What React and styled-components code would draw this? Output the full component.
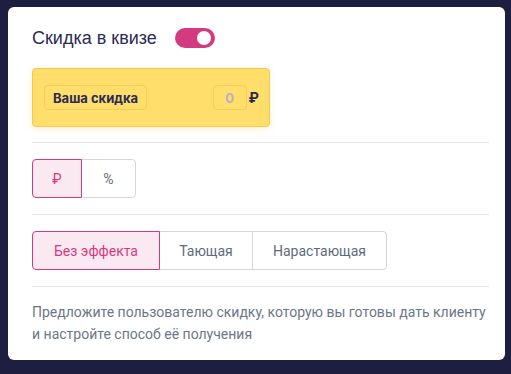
import React, { useState } from 'react';
import styled, { createGlobalStyle, css } from 'styled-components';

const Global = createGlobalStyle`
    html, body {
        margin: 0;
        background: #1e1f40;
    }
    body {
        padding: 7px 6px 14px 8px;
        font-family: Roboto, "Liberation Sans", sans-serif;
    }
`

const Card = styled.div`
    background: #fff;
    border-radius: 6px;
    padding: 20px 16px 15px 24px;
`

const Header = styled.div`
    display: flex;
    align-items: center;
    gap: 18px;
    height: 22px;
`

const Title = styled.div`
    font-family: "Liberation Sans", Arial, sans-serif;
    font-size: 18px;
    color: #2b2b55;
`

const Toggle = styled.div`
    width: 40px;
    height: 20px;
    border-radius: 10px;
    background: #d43a80;
    position: relative;
    &:after {
        content: '';
        position: absolute;
        right: 4px;
        top: 3px;
        width: 14px;
        height: 14px;
        border-radius: 50%;
        background: #fff;
    }
`

const DiscountBox = styled.div`
    margin-top: 19px;
    width: 238px;
    height: 59px;
    box-sizing: border-box;
    background: #ffde6c;
    border: 1px solid #f6c94a;
    border-radius: 4px;
    box-shadow: 0 2px 6px rgba(240, 200, 80, 0.25);
    display: flex;
    align-items: center;
    padding: 0 10px 0 11px;
`

const LabelField = styled.div`
    height: 25px;
    box-sizing: border-box;
    padding: 0 8px;
    border: 1px solid #f3ce5a;
    border-radius: 4px;
    display: flex;
    align-items: center;
    font-family: Inter, Roboto, sans-serif;
    font-weight: 700;
    font-size: 13px;
    color: #2b2b50;
`

const ValueField = styled.div`
    margin-left: auto;
    width: 34px;
    height: 25px;
    box-sizing: border-box;
    border: 1px solid #f3ce5a;
    border-radius: 4px;
    display: flex;
    align-items: center;
    justify-content: center;
    font-family: Inter, Roboto, sans-serif;
    font-weight: 700;
    font-size: 13px;
    color: #b7b3bf;
`

const Currency = styled.div`
    margin-left: 2px;
    font-family: Inter, Roboto, sans-serif;
    font-weight: 700;
    font-size: 14px;
    color: #2b2b50;
`

const Divider = styled.div`
    height: 1px;
    background: #e6e6e9;
    margin: ${({ top }) => top}px 0 ${({ bottom }) => bottom}px;
`

const Segmented = styled.div`
    display: flex;
`

const SegButton = styled.div`
    height: 39px;
    box-sizing: border-box;
    width: ${({ w }) => w}px;
    display: flex;
    align-items: center;
    justify-content: center;
    font-size: 14px;
    color: #5e6b7d;
    border: 1px solid #d5d6db;
    margin-left: -1px;
    &:first-child {
        margin-left: 0;
        border-radius: 4px 0 0 4px;
    }
    &:last-child {
        border-radius: 0 4px 4px 0;
    }
    ${({ active }) => active && css`
        position: relative;
        z-index: 1;
        background: #fbe9f2;
        border-color: #d43a80;
        color: #d43a80;
    `}
`

const Description = styled.p`
    margin: 0;
    font-size: 14px;
    line-height: 22px;
    color: #6b7788;
`

export default function App() {
    const [currency, setCurrency] = useState(0);
    const [effect, setEffect] = useState(0);
    const currencies = [['₽', 50], ['%', 55]];
    const effects = [['Без эффекта', 128], ['Тающая', 94], ['Нарастающая', 135]];
    return (
        <>
            <Global />
            <Card>
                <Header>
                    <Title>Скидка в квизе</Title>
                    <Toggle />
                </Header>
                <DiscountBox>
                    <LabelField>Ваша скидка</LabelField>
                    <ValueField>0</ValueField>
                    <Currency>₽</Currency>
                </DiscountBox>
                <Divider top={15} bottom={16} />
                <Segmented>
                    {currencies.map(([label, w], i) => (
                        <SegButton key={label} w={w} active={i === currency} onClick={() => setCurrency(i)}>
                            {label}
                        </SegButton>
                    ))}
                </Segmented>
                <Divider top={16} bottom={16} />
                <Segmented>
                    {effects.map(([label, w], i) => (
                        <SegButton key={label} w={w} active={i === effect} onClick={() => setEffect(i)}>
                            {label}
                        </SegButton>
                    ))}
                </Segmented>
                <Divider top={16} bottom={14} />
                <Description>
                    Предложите пользователю скидку, которую вы готовы дать клиенту и настройте способ её получения
                </Description>
            </Card>
        </>
    )
}
